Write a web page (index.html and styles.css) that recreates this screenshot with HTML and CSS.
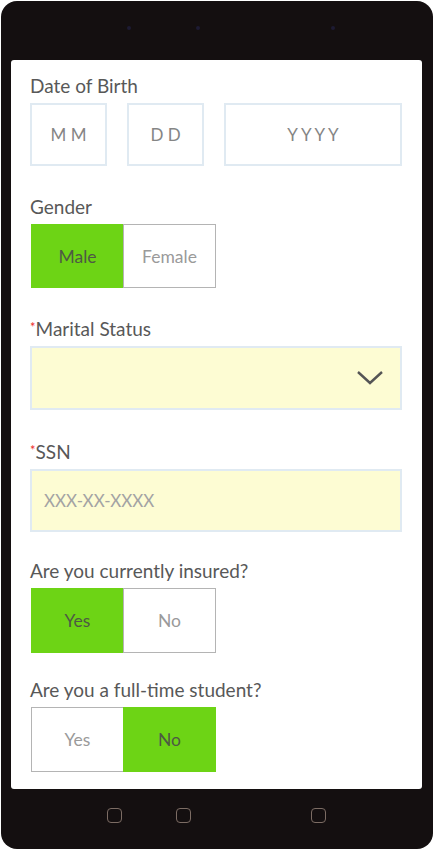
FILE: index.html
```html
<!DOCTYPE html>
<html>
<head>
<meta charset="utf-8">
<link rel="stylesheet" href="styles.css">
</head>
<body>
<div class="phone">
  <div class="sensors">
    <span class="dot d1"></span><span class="dot d2"></span><span class="dot d3"></span>
  </div>
  <div class="screen">
    <div class="section s-dob">
      <div class="label">Date of Birth</div>
      <div class="dob">
        <div class="dbox mm">M M</div>
        <div class="dbox dd">D D</div>
        <div class="dbox yy">YYYY</div>
      </div>
    </div>
    <div class="section s-gender">
      <div class="label">Gender</div>
      <div class="toggle">
        <div class="opt on">Male</div>
        <div class="opt">Female</div>
      </div>
    </div>
    <div class="section s-marital">
      <div class="label"><span class="req">*</span>Marital Status</div>
      <div class="field select">
        <svg class="chev" width="28" height="16" viewBox="0 0 28 16"><path d="M2 2 L14 13 L26 2" fill="none" stroke="#555" stroke-width="2.4"/></svg>
      </div>
    </div>
    <div class="section s-ssn">
      <div class="label"><span class="req">*</span>SSN</div>
      <div class="field ssn"><span class="ph">XXX-XX-XXXX</span></div>
    </div>
    <div class="section s-insured">
      <div class="label">Are you currently insured?</div>
      <div class="toggle">
        <div class="opt on">Yes</div>
        <div class="opt">No</div>
      </div>
    </div>
    <div class="section s-student">
      <div class="label">Are you a full-time student?</div>
      <div class="toggle">
        <div class="opt">Yes</div>
        <div class="opt on">No</div>
      </div>
    </div>
  </div>
  <div class="navbar">
    <span class="nbtn b1"></span><span class="nbtn b2"></span><span class="nbtn b3"></span>
  </div>
</div>
</body>
</html>
```
FILE: styles.css
```css
* { box-sizing: border-box; }
html, body { margin: 0; padding: 0; background: #ffffff; }
body { width: 434px; height: 850px; overflow: hidden; font-family: Lato, "Open Sans", sans-serif; }

.phone {
  width: 432px;
  height: 848px;
  margin: 1px;
  background: #140f10;
  border-radius: 16px;
  display: flex;
  flex-direction: column;
  align-items: flex-start;
}

.sensors {
  height: 59px;
  width: 100%;
  position: relative;
}
.dot {
  position: absolute;
  top: 25px;
  width: 4px;
  height: 4px;
  border-radius: 50%;
  background: #1d1b33;
}
.d1 { left: 126px; }
.d2 { left: 195px; }
.d3 { left: 330px; }

.screen {
  margin-left: 10px;
  width: 411px;
  height: 729px;
  background: #ffffff;
  border-radius: 3px;
  padding: 14px 20px 0 19px;
  overflow: hidden;
}

.section { margin-bottom: 29px; }
.s-marital { margin-bottom: 30px; }
.s-ssn { margin-bottom: 27px; }
.s-insured { margin-bottom: 25px; }

.label {
  font-size: 19px;
  line-height: 24px;
  height: 24px;
  color: #585858;
  margin-bottom: 5px;
}
.req {
  color: #ee2b2b;
  font-size: 13px;
  line-height: 0;
  vertical-align: 4px;
}

.dob { display: flex; gap: 20px; }
.dbox {
  height: 63px;
  border: 2px solid #e0eaf2;
  display: flex;
  align-items: center;
  justify-content: center;
  color: #858585;
  font-size: 17px;
}
.mm, .dd { width: 77px; }
.yy { flex: 1; letter-spacing: 3px; padding-left: 3px; }

.toggle { display: flex; margin-left: 1px; }
.opt {
  width: 93px;
  height: 64px;
  border: 1px solid #b4b4b4;
  display: flex;
  align-items: center;
  justify-content: center;
  font-size: 17.5px;
  color: #9a9a9a;
  background: #ffffff;
}
.s-insured .opt, .s-student .opt { height: 65px; }
.opt + .opt { margin-left: -1px; }
.opt.on {
  background: #6dd415;
  border-color: #6dd415;
  color: #4e5a44;
}

.field {
  height: 64px;
  border: 2px solid #e0eaf2;
  background: #fdfcd3;
  display: flex;
  align-items: center;
}
.s-ssn .field { height: 63px; }
.select { justify-content: flex-end; padding-right: 16px; }
.ssn { padding-left: 12px; }
.ph { color: #a3a3a3; font-size: 17px; }

.navbar {
  width: 100%;
  height: 58px;
  position: relative;
}
.nbtn {
  position: absolute;
  top: 19px;
  width: 15px;
  height: 15px;
  border: 1.5px solid #7c6c64;
  border-radius: 4px;
}
.b1 { left: 106px; }
.b2 { left: 175px; }
.b3 { left: 310px; }
```
